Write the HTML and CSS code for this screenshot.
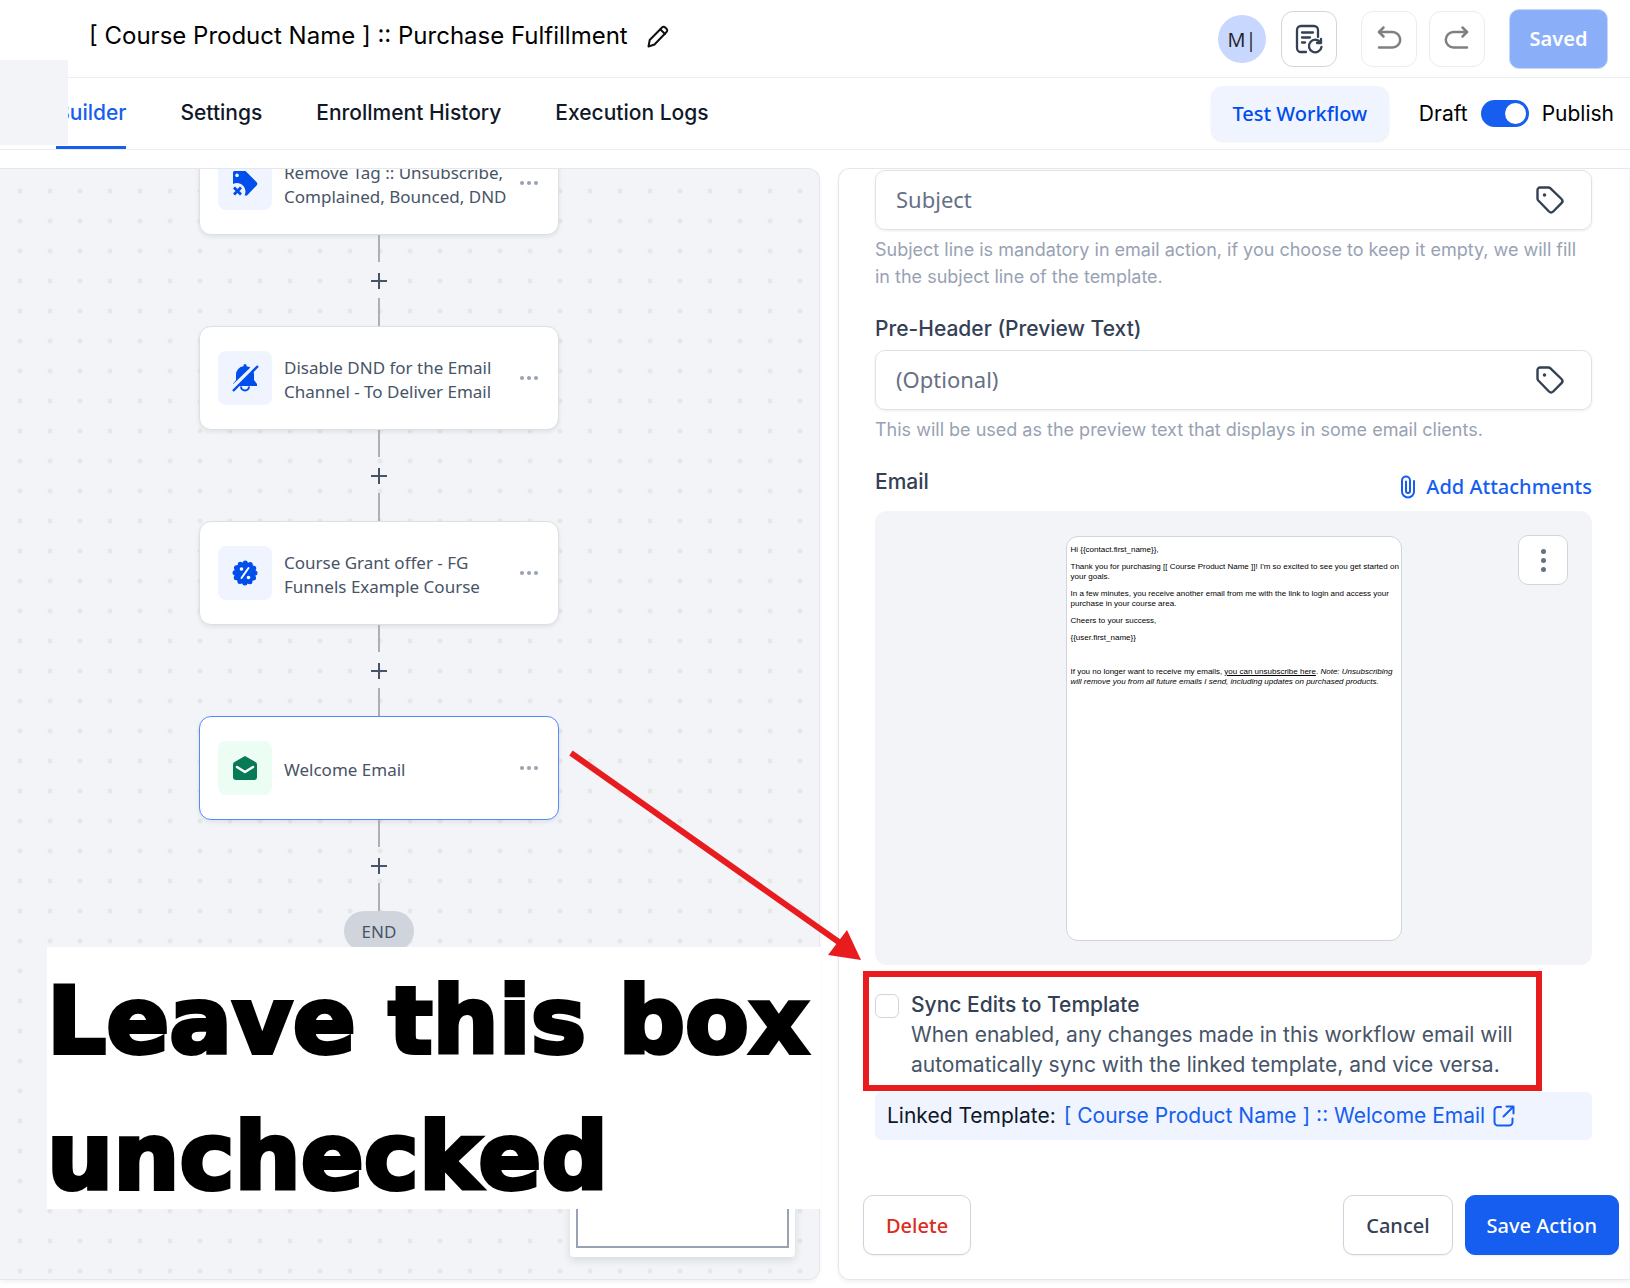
FILE: index.html
```html
<!DOCTYPE html>
<html lang="en">
<head>
<meta charset="utf-8">
<meta name="viewport" content="width=device-width, initial-scale=1">
<title>Purchase Fulfillment workflow</title>
<link rel="stylesheet" href="styles.css">
</head>
<body>
<header class="topbar">
  <h1 class="title">[ Course Product Name ] :: Purchase Fulfillment</h1>
  <button class="icon-plain" aria-label="Rename workflow">
    <svg width="22" height="24" viewBox="0 0 22 24" fill="none" stroke="#111" stroke-width="2" stroke-linejoin="round" stroke-linecap="round"><path d="M1.500 22.500l1.200-6.500L15 3.500a2.200 2.200 0 0 1 3.200 0l1.300 1.300a2.200 2.200 0 0 1 0 3.200L7.500 20.500z"/><path d="M13.500 5.500l4.500 4.500"/></svg>
  </button>
  <div class="top-actions">
    <span class="avatar">M|</span>
    <button class="square" aria-label="Version history">
      <svg width="28" height="30" viewBox="0 0 28 30" fill="none" stroke="#344054" stroke-width="2.300" stroke-linecap="round" stroke-linejoin="round"><path d="M11 28H6a4 4 0 0 1-4-4V6a4 4 0 0 1 4-4h13a4 4 0 0 1 4 4v7"/><path d="M7 8.500h11M7 13.500h8M7 18.500h3"/><path d="M25.500 18.500a6.300 6.300 0 1 0 1 4.500"/><path d="M26 15v4h-4"/></svg>
    </button>
    <div class="pair">
      <button class="square faint" aria-label="Undo">
        <svg width="24" height="24" viewBox="0 0 24 24" fill="none" stroke="#808080" stroke-width="2.500" stroke-linecap="round" stroke-linejoin="round"><path d="M6.500 0.500L2 5l4.500 4.500"/><path d="M2 5h13.500a7.500 7.500 0 0 1 0 15.500H2"/></svg>
      </button>
      <button class="square faint" aria-label="Redo">
        <svg width="24" height="24" viewBox="0 0 24 24" fill="none" stroke="#808080" stroke-width="2.500" stroke-linecap="round" stroke-linejoin="round"><path d="M17.500 0.500L22 5l-4.500 4.500"/><path d="M22 5H8.500a7.500 7.500 0 0 0 0 15.500H22"/></svg>
      </button>
    </div>
    <button class="saved">Saved</button>
  </div>
</header>

<nav class="tabs">
  <a class="tab active" href="#builder">Builder</a>
  <a class="tab" href="#settings">Settings</a>
  <a class="tab" href="#history">Enrollment History</a>
  <a class="tab" href="#logs">Execution Logs</a>
  <div class="tab-actions">
    <button class="test">Test Workflow</button>
    <label class="publish"><span>Draft</span><input type="checkbox" role="switch" class="switch" checked><span>Publish</span></label>
  </div>
  <div class="side-patch"></div>
</nav>

<main class="workspace">
  <section class="canvas" id="builder">
    <div class="flow">
      <article class="card">
        <span class="badge"><svg width="26" height="26" viewBox="0 0 26 26"><path fill="#004eeb" fill-rule="evenodd" d="M1 2.500A1.500 1.500 0 0 1 2.500 1H13.500L24.500 12a2.500 2.500 0 0 1 0 3.500L15 25.500h-2.500c3-6-1.500-12.500-7.500-12.500-1.500 0-2.800.300-4 1zM5 3.500a1.800 1.800 0 1 0 .01 0z"/><path d="M2 17.500l7 7M9 17.500l-7 7" stroke="#004eeb" stroke-width="2.800"/></svg></span>
        <p>Remove Tag :: Unsubscribe, Complained, Bounced, DND</p>
        <button class="more" aria-label="More"><i></i><i></i><i></i></button>
      </article>
      <div class="link"><button aria-label="Add step"></button></div>
      <article class="card">
        <span class="badge"><svg width="26" height="28" viewBox="0 0 26 28"><path fill="#004eeb" d="M13 0a1.500 1.500 0 0 1 1.500 1.500v.700A8.500 8.500 0 0 1 22 10.500V16l3 4v2H1v-2l3-4v-5.500a8.500 8.500 0 0 1 7.500-8.300v-.700A1.500 1.500 0 0 1 13 0z"/><path d="M9 22.500a4 4 0 0 0 8 0" fill="none" stroke="#004eeb" stroke-width="2"/><path d="M-1 25L25 0" stroke="#eff4ff" stroke-width="4"/><path d="M1 27L26 2" stroke="#004eeb" stroke-width="2.400"/></svg></span>
        <p>Disable DND for the Email Channel - To Deliver Email</p>
        <button class="more" aria-label="More"><i></i><i></i><i></i></button>
      </article>
      <div class="link"><button aria-label="Add step"></button></div>
      <article class="card">
        <span class="badge"><svg width="26" height="26" viewBox="0 0 26 26"><circle cx="13" cy="13" r="10.800" fill="#004eeb"/><circle cx="13" cy="13" r="10" fill="none" stroke="#004eeb" stroke-width="5" stroke-linecap="round" stroke-dasharray="0 5.236"/><path d="M9.500 18l7-10" stroke="#fff" stroke-width="2" stroke-linecap="round"/><circle cx="9.500" cy="9" r="1.800" fill="#fff"/><circle cx="16.500" cy="17.500" r="1.800" fill="#fff"/></svg></span>
        <p>Course Grant offer - FG Funnels Example Course</p>
        <button class="more" aria-label="More"><i></i><i></i><i></i></button>
      </article>
      <div class="link"><button aria-label="Add step"></button></div>
      <article class="card selected">
        <span class="badge green"><svg width="26" height="26" viewBox="0 0 26 26"><path fill="#087a55" d="M13 1l10.500 6A3 3 0 0 1 25 9.500V22a3 3 0 0 1-3 3H4a3 3 0 0 1-3-3V9.500A3 3 0 0 1 2.500 7z"/><path d="M5 12l8 5 8-5" fill="none" stroke="#fff" stroke-width="2.600" stroke-linecap="round" stroke-linejoin="round"/></svg></span>
        <p>Welcome Email</p>
        <button class="more" aria-label="More"><i></i><i></i><i></i></button>
      </article>
      <div class="link"><button aria-label="Add step"></button></div>
      <span class="end">END</span>
    </div>
    <div class="minimap"><div class="minimap-view"></div></div>
  </section>

  <aside class="panel">
    <form class="fields">
      <div class="input">
        <input type="text" placeholder="Subject" aria-label="Subject">
        <button type="button" class="icon-plain" aria-label="Insert value"><svg width="28" height="28" viewBox="0 0 28 28" fill="none" stroke="#344054" stroke-width="2.400" stroke-linejoin="round"><path d="M1.500 4a2.500 2.500 0 0 1 2.500-2.500h8.500a3 3 0 0 1 2 .800L25.500 13a3 3 0 0 1 0 4.200l-8.300 8.300a3 3 0 0 1-4.200 0L2.300 14.500a3 3 0 0 1-.800-2z"/><circle cx="8.500" cy="9" r="1" fill="#344054" stroke-width="1.500"/></svg></button>
      </div>
      <p class="help">Subject line is mandatory in email action, if you choose to keep it empty, we will fill in the subject line of the template.</p>

      <label class="label" for="preheader">Pre-Header (Preview Text)</label>
      <div class="input">
        <input type="text" id="preheader" placeholder="(Optional)">
        <button type="button" class="icon-plain" aria-label="Insert value"><svg width="28" height="28" viewBox="0 0 28 28" fill="none" stroke="#344054" stroke-width="2.400" stroke-linejoin="round"><path d="M1.500 4a2.500 2.500 0 0 1 2.500-2.500h8.500a3 3 0 0 1 2 .800L25.500 13a3 3 0 0 1 0 4.200l-8.300 8.300a3 3 0 0 1-4.200 0L2.300 14.500a3 3 0 0 1-.800-2z"/><circle cx="8.500" cy="9" r="1" fill="#344054" stroke-width="1.500"/></svg></button>
      </div>
      <p class="help">This will be used as the preview text that displays in some email clients.</p>

      <div class="email-head">
        <span>Email</span>
        <button type="button" class="attach"><svg width="16" height="24" viewBox="0 0 16 24" fill="none" stroke="#155eef" stroke-width="2" stroke-linecap="round"><path d="M15 6v10.500a6 6 0 0 1-12 0V5.500a4 4 0 0 1 8 0V16a2 2 0 0 1-4 0V6.500"/></svg>Add Attachments</button>
      </div>
      <div class="preview">
        <div class="mail">
          <p>Hi {{contact.first_name}},</p>
          <p>Thank you for purchasing [[ Course Product Name ]]! I'm so excited to see you get started on your goals.</p>
          <p>In a few minutes, you receive another email from me with the link to login and access your purchase in your course area.</p>
          <p>Cheers to your success,</p>
          <p>{{user.first_name}}</p>
          <p class="fine">If you no longer want to receive my emails, <a href="#unsubscribe">you can unsubscribe here</a>. <em>Note: Unsubscribing will remove you from all future emails I send, including updates on purchased products.</em></p>
        </div>
        <button type="button" class="kebab" aria-label="Email options"><i></i><i></i><i></i></button>
      </div>

      <div class="sync">
        <input type="checkbox" id="sync">
        <div>
          <label for="sync">Sync Edits to Template</label>
          <p>When enabled, any changes made in this workflow email will automatically sync with the linked template, and vice versa.</p>
        </div>
      </div>
      <div class="linked">
        <span>Linked Template:</span>
        <a href="#template">[ Course Product Name ] :: Welcome Email</a>
        <svg width="22" height="22" viewBox="0 0 22 22" fill="none" stroke="#155eef" stroke-width="2" stroke-linecap="round" stroke-linejoin="round"><path d="M8 2H5a3.500 3.500 0 0 0-3.500 3.500v11A3.500 3.500 0 0 0 5 20.500h11a3.500 3.500 0 0 0 3.500-3.500v-3.500"/><path d="M13.500 1.500h7v7M20 2l-9.500 9.500"/></svg>
      </div>
    </form>
    <footer class="actions">
      <button class="btn danger">Delete</button>
      <button class="btn">Cancel</button>
      <button class="btn primary">Save Action</button>
    </footer>
  </aside>

  <p class="note">Leave this box<br>unchecked</p>
  <svg class="arrow" width="300" height="220" viewBox="0 0 300 220"><path d="M5 4L277 196" stroke="#e81c1e" stroke-width="6"/><path fill="#e81c1e" d="M295 211L281 181 262 206z"/></svg>
</main>
</body>
</html>
```

FILE: styles.css
```css
* { box-sizing: border-box; }

body {
  margin: 0;
  min-height: 100vh;
  display: flex;
  flex-direction: column;
  overflow-x: hidden;
  background: #fff;
  color: #101828;
  font: 400 21px/30px Inter, sans-serif;
}

h1, p { margin: 0; font-weight: 400; }
a { color: inherit; text-decoration: none; }
svg { display: block; flex: none; overflow: visible; }

button {
  padding: 0;
  border: 0;
  background: none;
  color: inherit;
  font: 500 20px/28px "Noto Sans", "Open Sans", sans-serif;
}

.icon-plain { display: grid; place-items: center; }

/* Top bar */
.topbar {
  display: flex;
  align-items: center;
  gap: 19px;
  height: 78px;
  padding: 0 22px 0 89px;
  border-bottom: 1px solid #eaecf0;
}
.title { color: #000; font-size: 24px; line-height: 36px; padding-bottom: 6px; }
.topbar > .icon-plain { padding-bottom: 6px; }
.top-actions { margin-left: auto; display: flex; align-items: center; gap: 24px; }
.avatar {
  width: 48px;
  height: 48px;
  margin-right: -9px;
  border-radius: 50%;
  background: #c7d7fe;
  color: #222;
  font: 400 20px/50px "Open Sans", sans-serif;
  text-align: center;
}
.square {
  display: grid;
  place-items: center;
  width: 56px;
  height: 56px;
  border: 1px solid #d0d5dd;
  border-radius: 12px;
}
.faint { border-color: #eaecf0; }
.pair { display: flex; gap: 12px; }
.saved {
  width: 99px;
  height: 60px;
  padding-top: 1px;
  border: 1px solid #c7d7fe;
  border-radius: 10px;
  background: #8aaef8;
  color: #fff;
  font-weight: 600;
}

/* Tabs */
.tabs {
  position: relative;
  display: flex;
  gap: 54px;
  height: 72px;
  padding: 0 16px 0 56px;
  border-bottom: 1px solid #eaecf0;
}
.tab { padding-top: 20px; font-weight: 500; white-space: nowrap; }
.active { color: #155eef; border-bottom: 3px solid #155eef; }
.tab-actions { margin-left: auto; display: flex; align-items: center; gap: 30px; }
.test {
  width: 178px;
  height: 55px;
  padding-top: 1px;
  border-radius: 12px;
  background: #eff4ff;
  box-shadow: 0 1px 2px rgba(16, 24, 40, .08);
  color: #004eeb;
}
.publish { display: flex; align-items: center; gap: 13px; color: #000; }
.switch {
  appearance: none;
  width: 48px;
  height: 27px;
  margin: 0;
  padding: 3px;
  border-radius: 14px;
  background: #155eef;
}
.switch::before {
  content: "";
  display: block;
  width: 21px;
  height: 21px;
  margin-left: auto;
  border-radius: 50%;
  background: #fff;
}
.side-patch {
  position: absolute;
  left: 0;
  top: -18px;
  width: 68px;
  height: 85px;
  background: #f2f4f7;
}

/* Workspace */
.workspace {
  position: relative;
  flex: 1;
  display: grid;
  grid-template-columns: minmax(0, 820fr) minmax(0, 792fr);
  gap: 18px;
  padding: 18px 0 8px;
}

.canvas {
  position: relative;
  overflow: hidden;
  padding-right: 61px;
  border: 1px solid #e4e7ec;
  border-left: 0;
  border-radius: 0 12px 12px 0;
  background: #f2f4f7 radial-gradient(circle at 15px 15px, #e6e8e8 2px, transparent 3px) 5px 7px / 30px 30px;
  box-shadow: 0 2px 4px rgba(16, 24, 40, .06);
}
.flow { display: flex; flex-direction: column; align-items: center; margin-top: -38px; }

.card {
  display: flex;
  align-items: center;
  gap: 12px;
  width: 360px;
  height: 104px;
  padding: 0 18px;
  border: 1px solid #dcdfe4;
  border-radius: 12px;
  background: #fff;
  box-shadow: 0 2px 4px rgba(16, 24, 40, .08);
  color: #475467;
  font: 400 17px/24px "Noto Sans", "Open Sans", sans-serif;
}
.card p { flex: 1; margin-right: -14px; padding-top: 3px; }
.selected { border-color: #528bff; }
.badge {
  display: grid;
  place-items: center;
  width: 54px;
  height: 54px;
  border-radius: 8px;
  background: #eff4ff;
}
.green { background: #ecfdf3; }
.more { display: flex; gap: 3px; padding: 8px 2px; }
.more i { width: 4px; height: 4px; border-radius: 50%; background: #98a2b3; }

.link {
  display: flex;
  align-items: center;
  justify-content: center;
  width: 2px;
  height: 91px;
  background: linear-gradient(#adafb4 27px, transparent 27px 63px, #adafb4 63px);
}
.link button {
  flex: none;
  width: 16px;
  height: 16px;
  background:
    linear-gradient(#475467, #475467) center / 16px 2px no-repeat,
    linear-gradient(#475467, #475467) center / 2px 16px no-repeat;
}
.end {
  padding: 2px 18px 0;
  border-radius: 20px;
  background: #d0d5dd;
  color: #475467;
  font: 400 17px/38px "Noto Sans", sans-serif;
}

.minimap {
  position: absolute;
  right: 24px;
  bottom: 22px;
  width: 225px;
  height: 150px;
  padding: 6px 6px 9px;
  border-radius: 4px;
  background: #fff;
  box-shadow: 0 3px 8px rgba(16, 24, 40, .12);
}
.minimap-view { height: 100%; border: 2px solid #98a2b3; }

/* Email action panel */
.panel {
  display: flex;
  flex-direction: column;
  justify-content: space-between;
  border: 1px solid #e4e7ec;
  border-right-color: #f2f4f7;
  border-radius: 12px 0 0 12px;
  box-shadow: 0 2px 4px rgba(16, 24, 40, .06);
}
.fields { padding: 1px 37px 0 36px; }

.input {
  display: flex;
  align-items: center;
  height: 60px;
  padding: 0 27px 0 20px;
  border: 1px solid #dfe2e7;
  border-radius: 10px;
  box-shadow: 0 1px 3px rgba(16, 24, 40, .08);
}
.input input {
  flex: 1;
  min-width: 0;
  padding: 0 0 2px;
  border: 0;
  outline: 0;
  background: none;
  font: 400 22px/30px "Noto Sans", "Open Sans", sans-serif;
}
.input input::placeholder { color: #667085; opacity: 1; }
.help { padding-top: 6px; color: #98a2b3; font-size: 18px; line-height: 27px; }
.label, .email-head { color: #344054; font-weight: 500; }
.label { display: block; margin-top: 24px; padding-bottom: 6px; }

.email-head { display: flex; justify-content: space-between; margin-top: 24px; height: 44px; }
.attach { display: flex; align-items: center; gap: 11px; height: 39px; color: #155eef; }

.preview {
  position: relative;
  padding: 25px 0 24px;
  border-radius: 12px;
  background: #f2f4f7;
}
.mail {
  width: 336px;
  height: 405px;
  margin: 0 auto;
  padding: 8px 0 8px 4px;
  border: 1px solid #d0d5dd;
  border-radius: 12px;
  background: #fff;
  color: #000;
  font: 400 8px/10px "Liberation Sans", Arial, sans-serif;
}
.mail p { margin-bottom: 7px; }
.mail a { text-decoration: underline; }
.mail .fine { margin-top: 24px; }
.kebab {
  position: absolute;
  top: 24px;
  right: 24px;
  display: flex;
  flex-direction: column;
  align-items: center;
  justify-content: center;
  gap: 4px;
  width: 50px;
  height: 50px;
  border: 1px solid #d0d5dd;
  border-radius: 10px;
  background: #fff;
}
.kebab i { width: 5px; height: 5px; border-radius: 50%; background: #667085; }

.sync { position: relative; display: flex; gap: 12px; padding: 25px 60px 12px 0; }
.sync::after {
  content: "";
  position: absolute;
  inset: 6px 50px 1px -12px;
  border: 6px solid #e81c1e;
  pointer-events: none;
}
.sync input {
  appearance: none;
  flex: none;
  width: 24px;
  height: 24px;
  margin: 4px 0 0;
  border: 1px solid #d0d5dd;
  border-radius: 6px;
}
.sync label { display: block; color: #344054; font-weight: 500; }
.sync p { color: #475467; }

.linked {
  display: flex;
  align-items: center;
  gap: 8px;
  height: 48px;
  padding: 0 12px;
  border-radius: 6px;
  background: #eff4ff;
}
.linked a { color: #155eef; }

.actions { display: flex; gap: 12px; padding: 0 10px 24px 24px; }
.btn {
  height: 60px;
  padding: 2px 22px 0;
  border: 1px solid #d0d5dd;
  border-radius: 10px;
  background: #fff;
  box-shadow: 0 1px 2px rgba(16, 24, 40, .06);
  color: #344054;
}
.danger { margin-right: auto; color: #d92d20; }
.primary { padding: 2px 21px 0; border-color: #155eef; background: #155eef; color: #fff; }

/* Annotations laid over the workspace */
.note {
  position: absolute;
  left: 47px;
  top: 797px;
  width: 774px;
  height: 262px;
  padding-top: 6px;
  background: #fff;
  color: #000;
  font: 700 93px/136px "DejaVu Sans", sans-serif;
  -webkit-text-stroke: 4px #000;
}
.arrow { position: absolute; left: 566px; top: 599px; }
```
